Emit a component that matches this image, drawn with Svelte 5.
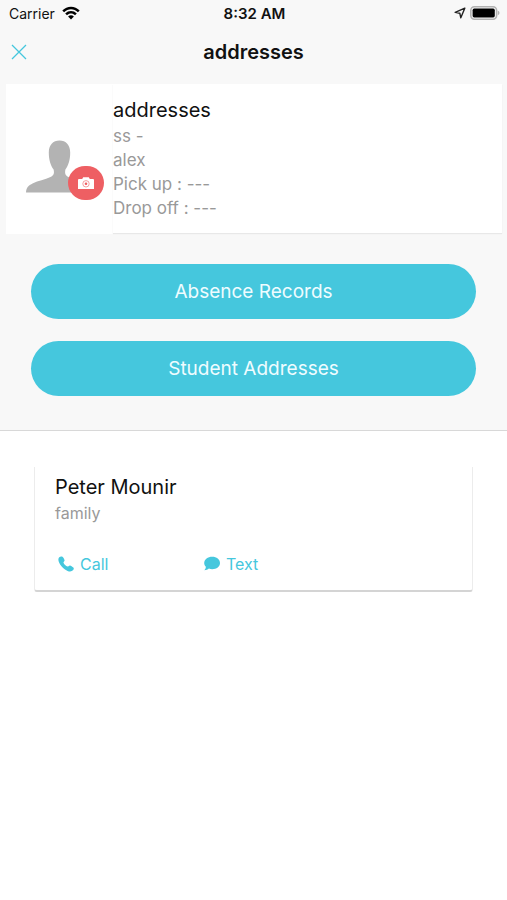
<script lang="ts">
	/**
	 * Student profile screen: details, shortcuts and family contacts.
	 */

	const student = {
		name: 'addresses',
		details: ['ss -', 'alex', 'Pick up : ---', 'Drop off : ---']
	};

	const actions = ['Absence Records', 'Student Addresses'];

	const contacts = [{ name: 'Peter Mounir', relation: 'family' }];
</script>

<div class="screen">
	<div class="top">
		<div class="status-bar">
			<div class="carrier">
				<span>Carrier</span>
				<svg class="wifi" viewBox="0 0 18 14" aria-hidden="true">
					<path d="M0.3 4.5 C5 -0.6 13 -0.6 17.7 4.5 L15.9 6.3 C12 2.3 6 2.3 2.1 6.3 Z" />
					<path d="M3.2 7.4 C6.5 4.1 11.5 4.1 14.8 7.4 L13 9.2 C10.6 7 7.4 7 5 9.2 Z" />
					<path d="M6.1 10.4 C7.8 8.8 10.2 8.8 11.9 10.4 L9 13.4 Z" />
				</svg>
			</div>
			<span class="time">8:32 AM</span>
			<div class="indicators">
				<svg class="location" viewBox="0 0 12 12" aria-hidden="true">
					<path d="M10.8 1.2 L1.2 5.4 L5.8 6.2 L6.8 10.8 Z" />
				</svg>
				<svg class="battery" viewBox="0 0 30 14" aria-hidden="true">
					<rect x="0.8" y="0.8" width="25.8" height="12.4" rx="3.6" fill="#f8f8f8" stroke="#b2b2b2" stroke-width="1.6" />
					<rect x="2.6" y="2.6" width="22.2" height="8.8" rx="1.6" fill="#000" />
					<path d="M27.8 4.8 C30 5.4 30 8.6 27.8 9.2 Z" fill="#b2b2b2" />
				</svg>
			</div>
		</div>

		<header class="nav-bar">
			<button type="button" class="close" aria-label="Close">
				<svg viewBox="0 0 16 16" aria-hidden="true">
					<path d="M1 1 L15 15 M15 1 L1 15" />
				</svg>
			</button>
			<h1>{student.name}</h1>
		</header>

		<section class="student">
			<div class="photo">
				<div class="avatar">
					<svg class="person" viewBox="0 0 68 53" aria-hidden="true">
						<path
							d="M33.5 0.5 C27 0.5 22.8 5 22.8 12.5 C22.8 20 24.6 25.5 27.6 29.5 C28.6 33.5 27.6 35.6 24.5 37 C19 39.6 12 40.8 7 43.2 C2 45.6 0.2 48 0 52.6 H67 C66.8 48 65 45.6 60 43.2 C55 40.8 48 39.6 42.5 37 C39.4 35.6 38.6 33.5 39.4 29.5 C42.4 25.5 44.2 20 44.2 12.5 C44.2 5 40 0.5 33.5 0.5 Z"
						/>
					</svg>
					<button type="button" class="camera" aria-label="Change photo">
						<svg viewBox="0 0 16 12" aria-hidden="true">
							<path d="M1 2 H4.2 L5.2 0.2 H10.8 L11.8 2 H15 Q16 2 16 3 V12 H0 V3 Q0 2 1 2 Z" fill="#fff" />
							<circle cx="8" cy="6.8" r="3.2" fill="none" stroke="#ee5f63" stroke-width="0.6" />
							<circle cx="8" cy="6.8" r="1.3" fill="#ee5f63" />
						</svg>
					</button>
				</div>
			</div>
			<div class="info">
				<h2>{student.name}</h2>
				{#each student.details as detail}
					<p>{detail}</p>
				{/each}
			</div>
		</section>

		<div class="actions">
			{#each actions as action}
				<button type="button" class="action">{action}</button>
			{/each}
		</div>
	</div>

	<main class="contacts">
		{#each contacts as contact}
			<article class="contact">
				<h2>{contact.name}</h2>
				<p>{contact.relation}</p>
				<div class="links">
					<button type="button" class="link">
						<svg viewBox="0 0 16 16" aria-hidden="true">
							<path
								d="M1 1.4 C2 0.4 3.8 0 4.7 0.9 C5.7 2 6.5 3.4 6.6 4.5 C6.6 5.5 5.3 5.9 5.5 6.7 C6.1 8.3 7.9 10 9.6 10.6 C10.5 10.7 10.9 9.4 11.9 9.4 C13 9.6 15 10.9 15.6 11.8 C16.2 13 15.2 14.4 13.8 15.1 C12 16 9.4 15.2 7 13.4 C4.4 11.6 2.2 9 1.1 6.4 C0.2 4.4 0.1 2.6 1 1.4 Z"
							/>
						</svg>
						<span>Call</span>
					</button>
					<button type="button" class="link">
						<svg viewBox="0 0 16 16" aria-hidden="true">
							<path
								d="M8.2 0.8 C12.6 0.8 16 3.5 16 7 C16 10.5 12.6 13.2 8.2 13.2 C7 13.2 5.9 13 4.9 12.6 C3.8 13.6 2.2 14.2 0.4 14.2 C1.4 13.1 1.9 12 1.9 10.8 C0.7 9.7 0.2 8.5 0.2 7 C0.2 3.5 3.8 0.8 8.2 0.8 Z"
							/>
						</svg>
						<span>Text</span>
					</button>
				</div>
			</article>
		{/each}
	</main>
</div>

<style>
	:global(body) {
		margin: 0;
		background: #fff;
	}

	.screen {
		min-height: 100vh;
		background: #fff;
		color: #111;
		font-family: Inter, 'Liberation Sans', sans-serif;
	}

	button {
		padding: 0;
		border: none;
		background: none;
		font-family: inherit;
		cursor: pointer;
	}

	h1,
	h2,
	p {
		margin: 0;
		font-weight: 400;
	}

	.top {
		background: #f8f8f8;
		border-bottom: 1px solid #d8d8d8;
	}

	.status-bar {
		display: grid;
		grid-template-columns: 1fr auto 1fr;
		align-items: center;
		height: 26px;
		padding: 0 7px 2px 9px;
		font-size: 14px;
	}

	.carrier,
	.indicators {
		display: flex;
		align-items: center;
		gap: 7px;
	}

	.indicators {
		justify-content: flex-end;
		gap: 4px;
	}

	.wifi {
		width: 18px;
		height: 14px;
	}

	.time {
		font-size: 15px;
		font-weight: 600;
	}

	.location {
		width: 12px;
		height: 12px;
		fill: none;
		stroke: #222;
		stroke-width: 1.4;
		stroke-linejoin: round;
	}

	.battery {
		width: 30px;
		height: 14px;
	}

	.nav-bar {
		display: grid;
		grid-template-columns: 1fr auto 1fr;
		align-items: center;
		height: 48px;
		padding: 0 11px;
	}

	.close {
		width: 16px;
		height: 16px;
	}

	.close svg {
		display: block;
		width: 16px;
		height: 16px;
		fill: none;
		stroke: #45c7dd;
		stroke-width: 1.3;
	}

	.nav-bar h1 {
		font-size: 20px;
		font-weight: 600;
	}

	.student {
		display: flex;
		margin: 8px 5px 0 6px;
	}

	.photo {
		display: flex;
		justify-content: center;
		width: 107px;
		padding-top: 56px;
		margin-bottom: -1px;
		box-sizing: border-box;
		background: #fff;
	}

	.avatar {
		position: relative;
		width: 68px;
		height: 53px;
	}

	.person {
		display: block;
		width: 68px;
		height: 53px;
		fill: #b3b3b3;
	}

	.camera {
		position: absolute;
		right: -10px;
		bottom: -7px;
		display: flex;
		align-items: center;
		justify-content: center;
		width: 36px;
		height: 34px;
		border-radius: 17px;
		background: #ee5f63;
	}

	.camera svg {
		width: 16px;
		height: 12px;
	}

	.info {
		flex: 1;
		padding: 12px 0 13px;
		background: #fff;
		box-shadow: 0 1px 1px #e8e8e8;
	}

	.info h2,
	.contact h2 {
		font-size: 20px;
		line-height: 28px;
	}

	.info p,
	.contact p {
		color: #999;
		font-size: 16px;
		line-height: 24px;
	}

	.info p {
		font-size: 17px;
	}

	.actions {
		display: flex;
		flex-direction: column;
		gap: 22px;
		padding: 31px 31px 34px;
	}

	.action {
		height: 55px;
		border-radius: 28px;
		background: #45c7dd;
		color: #effcff;
		font-size: 19px;
	}

	.contacts {
		padding: 36px 34px;
	}

	.contact {
		padding: 6px 20px 16px;
		border: solid #ececec;
		border-width: 0 1px 2px;
		border-bottom-color: #d4d4d4;
		border-radius: 0 0 3px 3px;
	}

	.contact p {
		line-height: 25px;
	}

	.links {
		display: grid;
		grid-template-columns: repeat(auto-fill, 146px);
		margin: 28px 0 0 3px;
	}

	.link {
		display: flex;
		align-items: center;
		gap: 6px;
		color: #45c7dd;
		font-size: 16px;
		line-height: 20px;
	}

	.link svg {
		width: 16px;
		height: 16px;
		fill: currentColor;
	}
</style>
